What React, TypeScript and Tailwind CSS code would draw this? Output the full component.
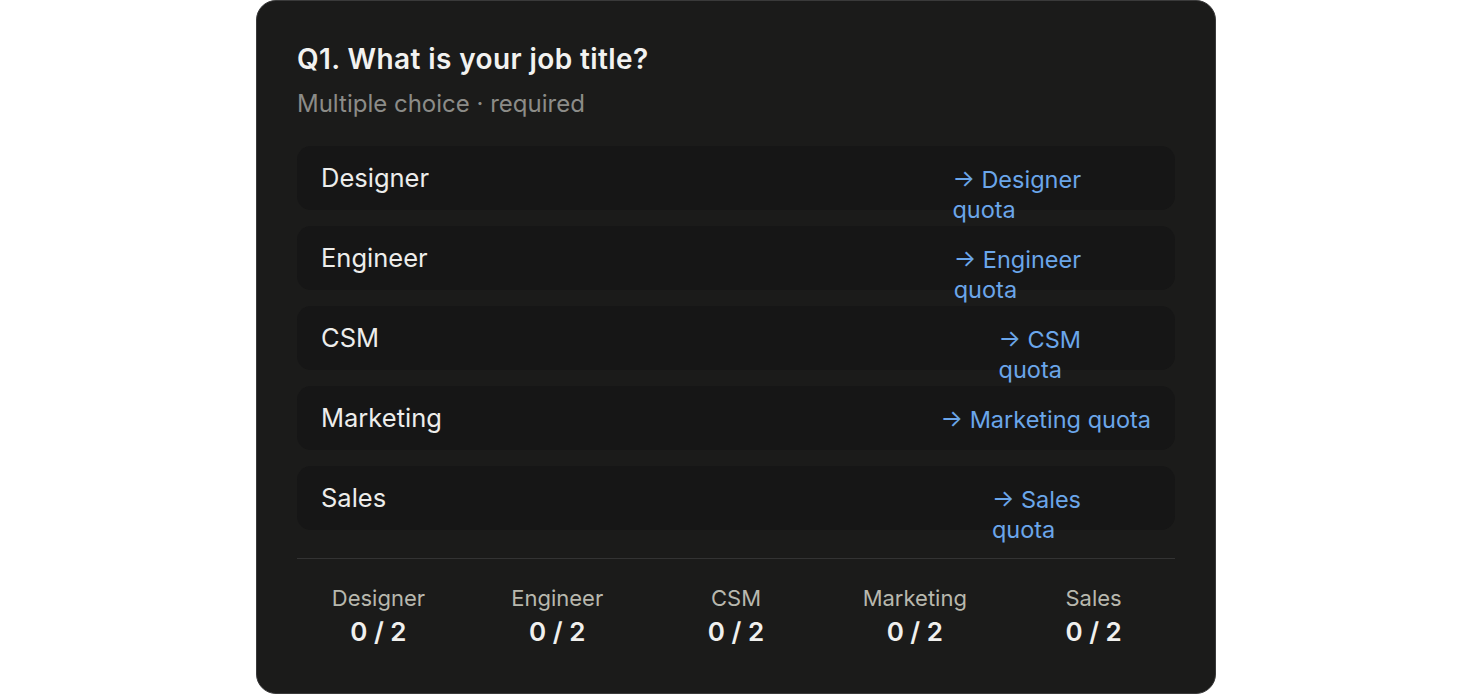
import React from "react";

type Option = { label: string; wrap: boolean };

const options: Option[] = [
  { label: "Designer", wrap: true },
  { label: "Engineer", wrap: true },
  { label: "CSM", wrap: true },
  { label: "Marketing", wrap: false },
  { label: "Sales", wrap: true },
];

function QuotaLink({ label, wrap }: Option) {
  // The hidden one-line copy sets the box width; the visible copy breaks before "quota".
  return (
    <span className="ml-auto mt-[3px] grid shrink-0 text-[23.5px] leading-[30px] text-[#6ba6ea]">
      <span className="invisible col-start-1 row-start-1 h-0 overflow-hidden whitespace-nowrap">
        → {label} quota
      </span>
      <span className="col-start-1 row-start-1 whitespace-nowrap">
        → {label}
        {wrap ? <br /> : " "}
        quota
      </span>
    </span>
  );
}

export default function App() {
  return (
    <div
      className="flex min-h-[694px] justify-center bg-white"
      style={{ fontFamily: "Inter, 'Noto Sans', sans-serif" }}
    >
      <div className="w-[960px] rounded-[20px] border border-[#3a3a3a] bg-[#1b1b1a] px-10 pb-[44px] pt-10">
        <h1 className="text-[28px] font-semibold leading-[36px] tracking-[0.4px] text-[#f2f2f0]">
          Q1. What is your job title?
        </h1>
        <p className="mt-3 text-[24px] leading-[30px] text-[#8c8c88]">
          Multiple choice · required
        </p>

        <div className="mt-[27px] flex flex-col gap-4">
          {options.map((o) => (
            <div
              key={o.label}
              className="flex h-16 items-start rounded-[14px] bg-[#161616] px-6 py-4"
            >
              <span className="text-[25.5px] leading-8 text-[#ededeb]">{o.label}</span>
              <QuotaLink {...o} />
            </div>
          ))}
        </div>

        <div className="mt-7 border-t border-[#333333]" />

        <div className="grid grid-cols-5 gap-4 pt-[25px] text-center">
          {options.map((o) => (
            <div key={o.label} className="flex flex-col items-center gap-1">
              <span className="text-[22px] leading-7 text-[#b8b8ae]">{o.label}</span>
              <span className="text-[26px] font-semibold leading-8 text-[#f0f0ee]">0 / 2</span>
            </div>
          ))}
        </div>
      </div>
    </div>
  );
}
